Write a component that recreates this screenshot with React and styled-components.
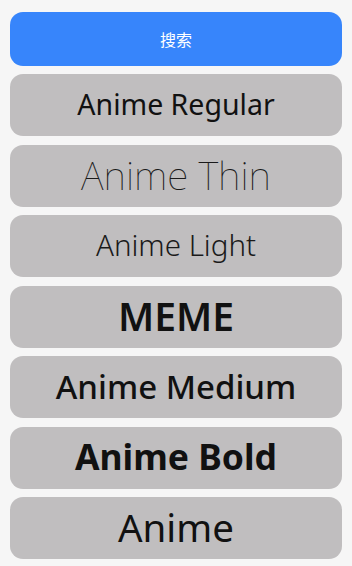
import React from "react";
import styled, { createGlobalStyle } from "styled-components";

const Global = createGlobalStyle`
  html, body { margin: 0; padding: 0; background: #f6f6f6; }
  body { font-family: "Noto Sans", "Noto Sans CJK SC", sans-serif; }
`;

const Page = styled.div`
  display: flex;
  flex-direction: column;
  gap: 8.5px;
  padding: 12px 10px 0;
`;

const SearchButton = styled.button`
  height: 53.5px;
  border: none;
  border-radius: 13px;
  background: #3785fb;
  color: #fff;
  font-family: "Noto Sans CJK SC", sans-serif;
  font-size: 16px;
  padding: 0;
`;

const FontCard = styled.div`
  height: 62px;
  border-radius: 13px;
  background: #c0bebf;
  display: flex;
  align-items: center;
  justify-content: center;
  color: ${(p) => p.$color || "#111"};
  font-family: "Noto Sans", sans-serif;
  font-size: ${(p) => p.$size}px;
  font-weight: ${(p) => p.$weight};
  line-height: 1;
  padding-bottom: 2px;
  box-sizing: border-box;
`;

const items = [
  { label: "Anime Regular", size: 28.5, weight: 420 },
  { label: "Anime Thin", size: 39, weight: 100, color: "#1a1a1a" },
  { label: "Anime Light", size: 29.5, weight: 300, color: "#1a1a1a" },
  { label: "MEME", size: 39, weight: 600 },
  { label: "Anime Medium", size: 33, weight: 520 },
  { label: "Anime Bold", size: 35.5, weight: 700 },
  { label: "Anime", size: 38.5, weight: 450 },
];

export default function App() {
  return (
    <>
      <Global />
      <Page>
        <SearchButton>搜索</SearchButton>
        {items.map((it) => (
          <FontCard key={it.label} $size={it.size} $weight={it.weight} $color={it.color}>
            {it.label}
          </FontCard>
        ))}
      </Page>
    </>
  );
}
